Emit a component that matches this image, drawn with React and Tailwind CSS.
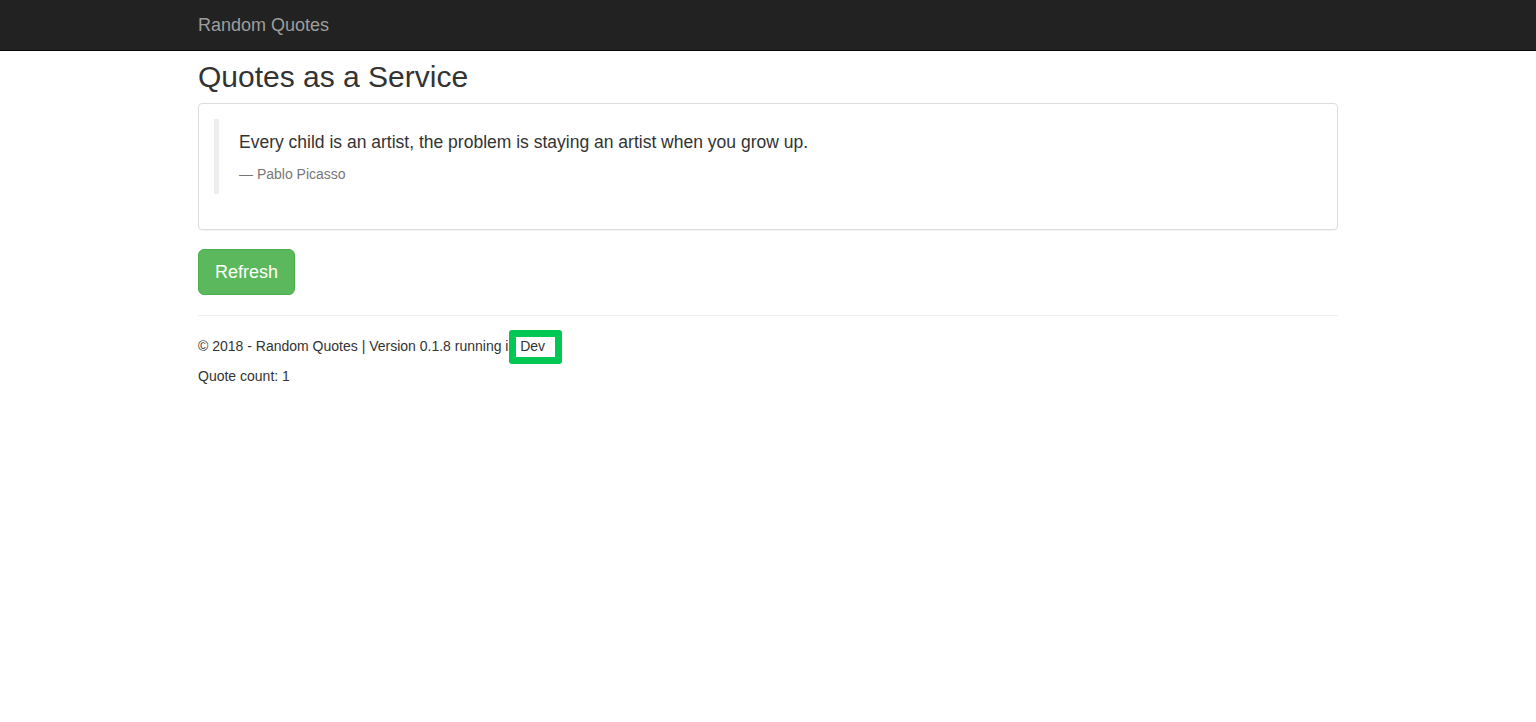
export default function App() {
  return (
    <div className="min-h-[722px] bg-white text-[#333] text-[14px] leading-[20px]" style={{ fontFamily: '"Liberation Sans", Arial, Helvetica, sans-serif' }}>
      <nav className="h-[51px] bg-[#222] border-b border-[#080808]">
        <div className="w-[1140px] mx-auto">
          <a className="block py-[15px] text-[18px] leading-[20px] text-[#9d9d9d]" href="#">Random Quotes</a>
        </div>
      </nav>
      <div className="w-[1140px] mx-auto">
        <h1 className="mt-[9px] mb-[10px] text-[30px] leading-[33px] font-normal">Quotes as a Service</h1>
        <div className="border border-[#ddd] rounded-[4px] shadow-[0_1px_1px_rgba(0,0,0,0.05)] p-[15px] mb-[19px]">
          <blockquote className="border-l-[5px] border-[#eee] pt-[11px] pb-[10px] px-[20px] mb-[20px]">
            <p className="text-[17.5px] leading-[25px] mb-[9px]">Every child is an artist, the problem is staying an artist when you grow up.</p>
            <footer className="text-[14px] leading-[20px] text-[#777]">—&nbsp;Pablo Picasso</footer>
          </blockquote>
        </div>
        <button className="h-[46px] px-[16px] py-[10px] text-[18px] leading-[24px] text-white bg-[#5cb85c] border border-[#4cae4c] rounded-[6px]">Refresh</button>
        <hr className="my-[20px] border-0 border-t border-[#eee]" />
        <p className="mb-[10px]">
          © 2018 - Random Quotes | Version 0.1.8 running in{' '}
          <span className="relative inline-block">
            Dev
            <span className="absolute left-[-11px] top-[-6px] w-[53px] h-[34px] border-[7px] border-[#00c853] rounded-[3px]"></span>
          </span>
        </p>
        <p className="mb-[10px]">Quote count: 1</p>
      </div>
    </div>
  );
}
